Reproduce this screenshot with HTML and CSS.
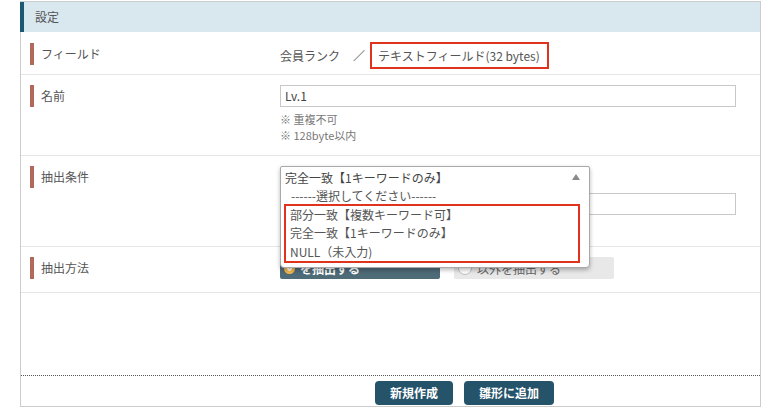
FILE: index.html
```html
<!DOCTYPE html>
<html lang="ja">
<head>
<meta charset="utf-8">
<title>設定</title>
<link rel="stylesheet" href="styles.css">
</head>
<body>
<div class="panel">
  <div class="panel-head">設定</div>

  <div class="row row-field">
    <div class="label">フィールド</div>
    <div class="value value-inline">
      <span class="crumb">会員ランク</span><span class="sep">／</span><span class="hl">テキストフィールド(32 bytes)</span>
    </div>
  </div>

  <div class="row row-name">
    <div class="label">名前</div>
    <div class="value">
      <div class="input">Lv.1</div>
      <div class="notes">
        <div>※ 重複不可</div>
        <div>※ 128byte以内</div>
      </div>
    </div>
  </div>

  <div class="row row-cond">
    <div class="label">抽出条件</div>
    <div class="value">
      <div class="select-wrap">
        <div class="select-field"></div>
        <div class="dropdown">
          <div class="dd-current"><span>完全一致【1キーワードのみ】</span><span class="caret"></span></div>
          <div class="dd-opt dd-placeholder">------選択してください------</div>
          <div class="dd-hl">
            <div class="dd-opt">部分一致【複数キーワード可】</div>
            <div class="dd-opt">完全一致【1キーワードのみ】</div>
            <div class="dd-opt">NULL（未入力)</div>
          </div>
        </div>
      </div>
      <div class="input input-second"></div>
    </div>
  </div>

  <div class="row row-method">
    <div class="label">抽出方法</div>
    <div class="value value-radios">
      <div class="radio radio-on"><span class="dot"></span>を抽出する</div>
      <div class="radio radio-off"><span class="dot"></span>以外を抽出する</div>
    </div>
  </div>

  <div class="spacer"></div>

  <div class="actions">
    <button class="btn">新規作成</button>
    <button class="btn">雛形に追加</button>
  </div>
</div>
</body>
</html>
```

FILE: styles.css
```css
html, body {
  margin: 0;
  padding: 0;
  background: #fff;
}
body {
  font-family: "Noto Sans CJK JP", "Noto Sans", sans-serif;
  font-size: 12px;
  color: #555;
  padding: 1px 0 0 20px;
}
.panel {
  width: 741px;
  box-sizing: border-box;
  border: 1px solid #cccccc;
}
.panel-head {
  height: 30px;
  line-height: 30px;
  background: #d9e8ef;
  border-left: 4px solid #1b5a72;
  margin-left: -1px;
  padding-left: 11px;
  color: #555;
  font-size: 12px;
}
.row {
  display: flex;
  align-items: flex-start;
  padding: 10px 24px 10px 9px;
  border-bottom: 1px solid #e6e6e6;
}
.label {
  width: 250px;
  flex: none;
  display: flex;
  align-items: center;
  height: 22px;
  line-height: 22px;
}
.label::before {
  content: "";
  width: 4px;
  height: 22px;
  background: #b0695b;
  margin-right: 7px;
}
.value {
  flex: 1;
}
.row-field {
  padding-bottom: 5px;
}
.row-field .label {
  height: 24px;
}
.value-inline {
  display: flex;
  align-items: center;
  height: 27px;
}
.crumb {
  margin-right: 13px;
}
.sep {
  margin-right: 5px;
}
.hl {
  border: 2px solid #e0331d;
  height: 23px;
  line-height: 23px;
  padding: 0 7px 0 6px;
}
.input {
  width: 456px;
  height: 22px;
  box-sizing: border-box;
  border: 1px solid #c8c8c8;
  line-height: 20px;
  padding-left: 4px;
  color: #444;
  background: #fff;
}
.notes {
  margin-top: 4px;
  font-size: 11px;
  line-height: 16px;
  color: #777;
}
.row-name {
  padding-bottom: 12px;
}
.row-cond {
  padding-bottom: 31px;
}
.select-wrap {
  position: relative;
  height: 22px;
}
.select-field {
  width: 310px;
  height: 22px;
}
.input-second {
  margin-top: 5px;
}
.dropdown {
  position: absolute;
  z-index: 10;
  left: 0;
  top: 0;
  width: 310px;
  box-sizing: border-box;
  background: #fff;
  border: 1px solid #a9a9a9;
  border-radius: 2px 2px 4px 4px;
  box-shadow: 0 2px 4px rgba(0, 0, 0, 0.28);
  padding-bottom: 4px;
}
.dd-current {
  display: flex;
  justify-content: space-between;
  align-items: center;
  height: 20px;
  padding: 0 9px 0 4px;
  color: #444;
}
.caret {
  width: 0;
  height: 0;
  border-left: 4px solid transparent;
  border-right: 4px solid transparent;
  border-bottom: 6px solid #8a8a8a;
}
.dd-opt {
  height: 18px;
  line-height: 18px;
  padding-left: 5px;
  color: #555;
}
.dd-placeholder {
  padding-left: 10px;
  height: 17px;
  line-height: 17px;
}
.dd-hl {
  margin-left: 3px;
  width: 296px;
  box-sizing: border-box;
  border: 2px solid #e0331d;
}
.dd-hl .dd-opt {
  padding-left: 4px;
  height: 18.4px;
  line-height: 18.4px;
}
.row-method {
  padding-bottom: 13px;
}
.value-radios {
  display: flex;
  gap: 14px;
}
.radio {
  width: 160px;
  height: 22px;
  box-sizing: border-box;
  display: flex;
  align-items: center;
  padding-left: 4px;
  border-radius: 2px;
}
.radio .dot {
  width: 11px;
  height: 11px;
  border-radius: 50%;
  margin-right: 5px;
  box-sizing: border-box;
}
.radio-on {
  background: #4e6b78;
  color: #fff;
  font-weight: bold;
}
.radio-on .dot {
  background: #eea233;
  border: 3px solid #f5b64a;
  box-shadow: inset 0 0 0 2px #fff;
}
.radio-off {
  background: #e8e8e8;
  color: #666;
}
.radio-off .dot {
  width: 14px;
  height: 14px;
  background: #fff;
  border: 1px solid #bdbdbd;
}
.spacer {
  height: 82px;
  border-bottom: 1px dotted #555;
}
.actions {
  display: flex;
  gap: 11px;
  padding: 5px 0 0 354px;
  box-sizing: border-box;
  height: 30px;
}
.btn {
  height: 24px;
  padding: 0 15px;
  border: none;
  border-radius: 4px;
  background: #25536a;
  color: #fff;
  font-family: "Noto Sans CJK JP", "Noto Sans", sans-serif;
  font-size: 12px;
  font-weight: bold;
  line-height: 24px;
  cursor: pointer;
}
```
